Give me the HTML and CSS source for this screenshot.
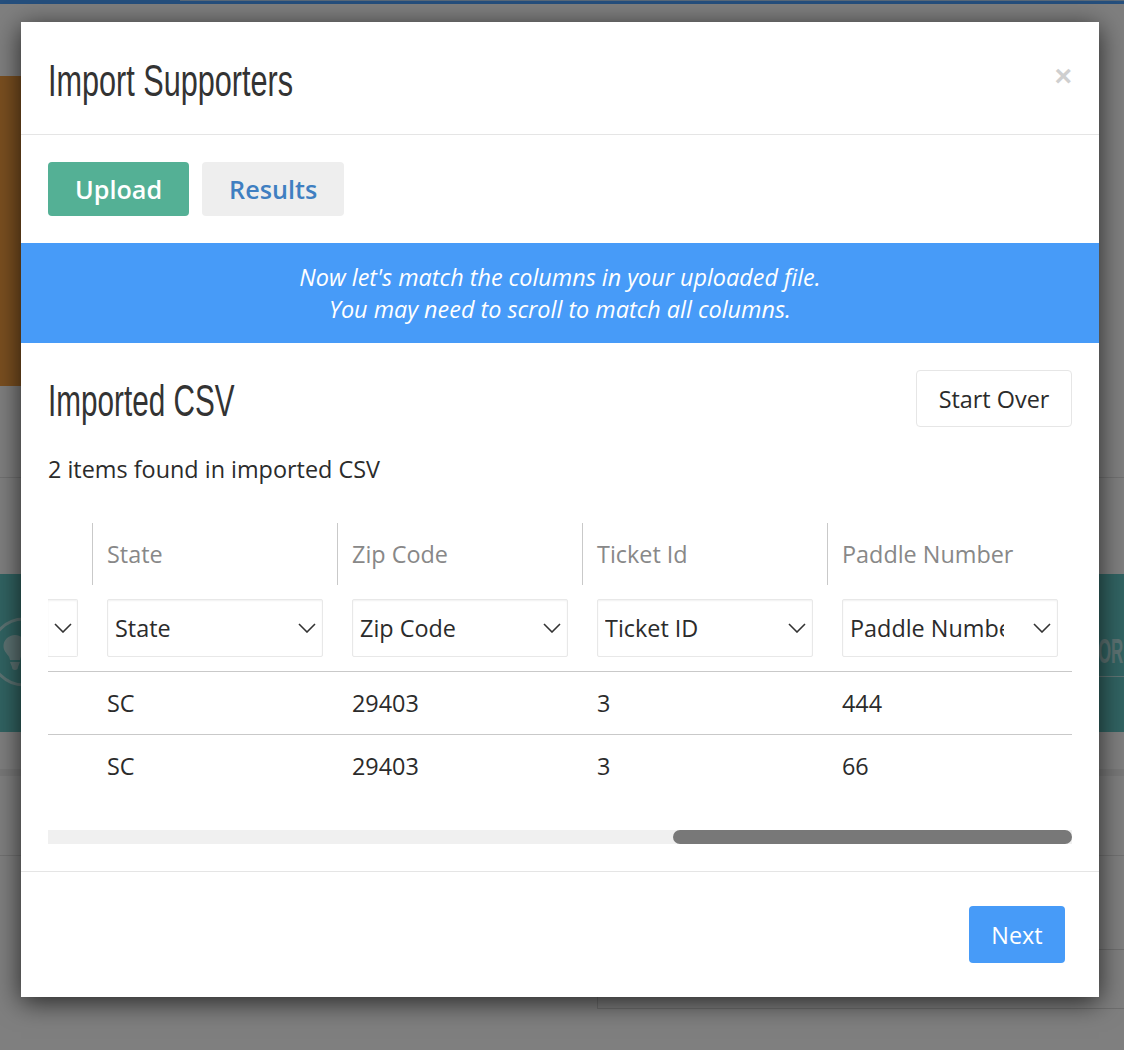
FILE: index.html
```html
<!DOCTYPE html>
<html lang="en">
<head>
<meta charset="utf-8">
<title>Import Supporters</title>
<link rel="stylesheet" href="styles.css">
</head>
<body>
<div class="page">
  <div class="page-topbar"></div>
  <div class="page-topbar-thin"></div>
  <div class="page-hero"></div>
  <div class="page-line page-line-a"></div>
  <div class="page-teal">
    <svg class="page-bulb" width="70" height="90" viewBox="0 0 70 90"><circle cx="24" cy="44" r="33" fill="none" stroke="#fff" stroke-opacity=".55" stroke-width="3"/><path d="M15 27c-6.500 0-11.500 5-11.500 11 0 5 3 7 5 10 1 1.500 1.300 3 1.500 4h10c.2-1 .5-2.500 1.500-4 2-3 5-5 5-10 0-6-5-11-11.500-11Z" fill="#fff" fill-opacity=".55"/><path d="M10 54h10l-2 5a3 3 0 0 1-6 0Z" fill="#fff" fill-opacity=".55"/></svg>
    <span class="page-teal-text">OR</span>
    <div class="page-teal-rule"></div>
  </div>
  <div class="page-band"></div>
  <div class="page-line page-line-b"></div>
  <div class="page-box"></div>
</div>
<div class="overlay"></div>
<div class="modal">
  <header class="modal-header">
    <h1 class="modal-title">Import Supporters</h1>
    <span class="modal-close">×</span>
  </header>
  <nav class="tabs">
    <button class="tab tab-active">Upload</button>
    <button class="tab tab-idle">Results</button>
  </nav>
  <div class="banner">Now let's match the columns in your uploaded file.<br>You may need to scroll to match all columns.</div>
  <section class="body">
    <div class="body-head">
      <h2 class="body-title">Imported CSV</h2>
      <button class="btn-outline">Start Over</button>
    </div>
    <p class="count">2 items found in imported CSV</p>
    <div class="table-wrap">
      <div class="row row-head">
        <div class="cell cell-stub"></div>
        <div class="cell head-cell">State</div>
        <div class="cell head-cell">Zip Code</div>
        <div class="cell head-cell">Ticket Id</div>
        <div class="cell head-cell">Paddle Number</div>
      </div>
      <div class="row row-select">
        <div class="cell cell-stub">
          <div class="select select-stub"><svg class="chev" width="18" height="10" viewBox="0 0 18 10"><path d="M1 1 9 9l8-8"/></svg></div>
        </div>
        <div class="cell"><div class="select"><span class="select-text">State</span><svg class="chev" width="18" height="10" viewBox="0 0 18 10"><path d="M1 1 9 9l8-8"/></svg></div></div>
        <div class="cell"><div class="select"><span class="select-text">Zip Code</span><svg class="chev" width="18" height="10" viewBox="0 0 18 10"><path d="M1 1 9 9l8-8"/></svg></div></div>
        <div class="cell"><div class="select"><span class="select-text">Ticket ID</span><svg class="chev" width="18" height="10" viewBox="0 0 18 10"><path d="M1 1 9 9l8-8"/></svg></div></div>
        <div class="cell"><div class="select"><span class="select-text">Paddle Number</span><svg class="chev" width="18" height="10" viewBox="0 0 18 10"><path d="M1 1 9 9l8-8"/></svg></div></div>
      </div>
      <div class="row row-data">
        <div class="cell cell-stub"></div>
        <div class="cell data-cell">SC</div>
        <div class="cell data-cell">29403</div>
        <div class="cell data-cell">3</div>
        <div class="cell data-cell">444</div>
      </div>
      <div class="row row-data">
        <div class="cell cell-stub"></div>
        <div class="cell data-cell">SC</div>
        <div class="cell data-cell">29403</div>
        <div class="cell data-cell">3</div>
        <div class="cell data-cell">66</div>
      </div>
    </div>
    <div class="scroll-track"><div class="scroll-thumb"></div></div>
  </section>
  <footer class="modal-footer">
    <button class="btn-next">Next</button>
  </footer>
</div>
</body>
</html>
```

FILE: styles.css
```css
* { box-sizing: border-box; }
html, body { margin: 0; height: 100%; }
body {
  position: relative;
  width: 1124px;
  height: 1050px;
  overflow: hidden;
  background: #fff;
  font-family: "Open Sans", "Noto Sans", sans-serif;
  color: #2b2b2b;
}

/* Page behind the dialog */
.page { position: absolute; inset: 0; }
.page-topbar { position: absolute; left: 0; top: 0; width: 100%; height: 4px; background: #4a9ffa; }
.page-topbar-thin { position: absolute; left: 180px; top: 0; right: 0; height: 1px; background: #b5d3f0; }
.page-hero { position: absolute; left: 0; top: 76px; width: 500px; height: 310px; background: #f49e41; }
.page-line { position: absolute; left: 0; width: 100%; height: 1px; background: #e2e2e2; }
.page-line-a { top: 477px; }
.page-line-b { top: 855px; }
.page-band { position: absolute; left: 0; top: 769px; width: 100%; height: 7px; background: #f0f0f0; }
.page-teal { position: absolute; left: 0; top: 574px; width: 100%; height: 158px; background: #62c6c4; overflow: hidden; }
.page-bulb { position: absolute; left: 0; top: 34px; }
.page-teal-text {
  position: absolute;
  left: 1098px;
  top: 57px;
  font: 700 35px/40px "Liberation Sans", sans-serif;
  color: #fff;
  opacity: .55;
  transform: scaleX(.48);
  transform-origin: left center;
}
.page-teal-rule { position: absolute; left: 1099px; right: 0; top: 102px; height: 1px; background: #fff; opacity: .6; }
.page-box { position: absolute; left: 597px; top: 949px; width: 540px; height: 60px; border: 1px solid #ddd; }
.overlay { position: absolute; inset: 0; background: rgba(0, 0, 0, .5); }

/* Dialog */
.modal {
  position: absolute;
  left: 21px;
  top: 22px;
  width: 1078px;
  height: 975px;
  background: #fff;
  box-shadow: 0 5px 25px rgba(0, 0, 0, .7);
  display: flex;
  flex-direction: column;
}
.modal-header {
  height: 113px;
  flex: none;
  border-bottom: 1px solid #e5e5e5;
  padding: 0 27px;
  display: flex;
  align-items: center;
  justify-content: space-between;
}
.modal-title {
  margin: 0;
  padding-top: 6px;
  font: 400 44px/1.1 "Liberation Sans", sans-serif;
  color: #333;
  white-space: nowrap;
  transform: scaleX(.696);
  transform-origin: left center;
}
.modal-close { font: 700 30px/1 "Liberation Sans", sans-serif; color: #cfcfcf; margin-top: -4px; }

.tabs { flex: none; display: flex; gap: 13px; padding: 27px 27px; }
.tab {
  height: 54px;
  border: 0;
  border-radius: 4px;
  font: 600 25.2px "Open Sans", sans-serif;
  padding: 0 27px;
}
.tab-active { background: #54b095; color: #fff; }
.tab-idle { background: #eeeeee; color: #3f7fc1; }

.banner {
  flex: none;
  height: 100px;
  background: #479bf8;
  color: #fff;
  font: italic 400 23.4px/32px "Open Sans", sans-serif;
  text-align: center;
  padding-top: 18px;
}

.body { flex: none; padding: 27px 27px 0; }
.body-head { display: flex; justify-content: space-between; align-items: center; height: 57px; }
.body-title {
  margin: 0;
  padding-top: 6px;
  font: 400 44px/1.1 "Liberation Sans", sans-serif;
  color: #333;
  white-space: nowrap;
  transform: scaleX(.675);
  transform-origin: left center;
}
.btn-outline {
  width: 156px;
  height: 57px;
  background: #fff;
  border: 1px solid #e6e6e6;
  border-radius: 4px;
  font: 400 23.4px "Open Sans", sans-serif;
  color: #2b2b2b;
}
.count { margin: 26px 0 0; font-size: 23.4px; line-height: 32px; }

.table-wrap { margin-top: 38px; overflow: hidden; }
.row { display: grid; grid-template-columns: 44px 245px 245px 245px 245px; }
.row-head { height: 62px; }
.row-select { height: 86px; padding-top: 14px; }
.row-data { height: 63px; border-top: 1px solid #c9c9c9; }
.cell { padding-left: 15px; min-width: 0; }
.cell-stub { padding-left: 0; }
.head-cell {
  border-left: 1px solid #c9c9c9;
  padding-left: 14px;
  color: #888;
  font-size: 23.4px;
  line-height: 62px;
}
.data-cell { font-size: 23.4px; line-height: 62px; }
.select {
  width: 216px;
  height: 58px;
  border: 1px solid #e8e8e8;
  box-shadow: inset 0 1px 2px rgba(0, 0, 0, .06);
  border-radius: 2px;
  display: flex;
  align-items: center;
  justify-content: space-between;
  padding: 0 6px 0 7px;
  font-size: 23.4px;
  color: #2b2b2b;
}
.select-text { width: 154px; overflow: hidden; white-space: nowrap; }
.select-stub { width: 30px; border-left: 0; border-radius: 0 2px 2px 0; padding: 0 5px 0 0; justify-content: flex-end; }
.chev { flex: none; }
.chev path { fill: none; stroke: #333; stroke-width: 1.6; }

.scroll-track { margin-top: 33px; height: 14px; background: #f0f0f0; }
.scroll-thumb { margin-left: 625px; width: 399px; height: 14px; border-radius: 7px; background: #787878; }

.modal-footer {
  margin-top: 27px;
  flex: 1;
  border-top: 1px solid #e5e5e5;
  display: flex;
  justify-content: flex-end;
  align-items: flex-start;
  padding: 34px 34px 0;
}
.btn-next {
  width: 96px;
  height: 57px;
  border: 0;
  border-radius: 4px;
  background: #479bf8;
  color: #fff;
  font: 400 23.4px "Open Sans", sans-serif;
}
```
